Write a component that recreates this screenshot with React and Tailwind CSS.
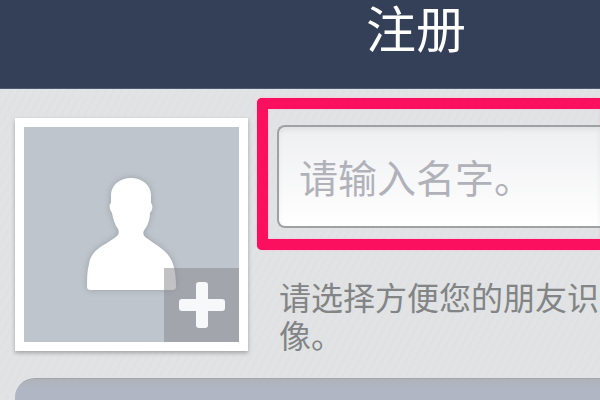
import React, {useState} from "react";

const AvatarPicker = () => {
	return (
		<button
			type="button"
			aria-label="头像"
			className="relative mt-5 aspect-square w-[233px] shrink-0 border-[9px] border-white bg-[#bec5cc] shadow-[0_2px_4px_rgba(0,0,0,0.28)]"
		>
			<svg
				viewBox="0 0 215 215"
				className="block h-full w-full"
				aria-hidden="true"
			>
				<path
					d="M107 51C96 51 87 58 87 68V76C85 77 85 82 88 86C89 92 91 98 94 102C96 107 94 109 89 112C79 119 67 123 65 137C63 144 63 152 63 160Q63 163 67 163H148Q152 163 152 160C152 151 151 143 149 137C145 124 133 119 124 112C119 109 118 106 121 102C124 98 126 92 126 86C129 83 129 78 127 76V68C127 58 118 51 107 51Z"
					fill="#fff"
					className="drop-shadow-[0_0_3px_rgba(90,95,100,0.35)]"
				/>
			</svg>
			<span className="absolute right-0 bottom-0 flex h-[74px] w-[75px] items-center justify-center bg-[#85868c]/50">
				<svg viewBox="0 0 46 46" className="h-[46px] w-[46px]" aria-hidden="true">
					<rect x="17" y="0" width="12" height="46" rx="3" fill="#f7f8fa" />
					<rect x="0" y="17" width="46" height="12" rx="3" fill="#f7f8fa" />
				</svg>
			</span>
		</button>
	);
};

const App = () => {
	const [name, setName] = useState("");

	return (
		<div className="flex min-h-screen flex-col overflow-hidden bg-[#dfe1e3] bg-[repeating-linear-gradient(118deg,rgba(255,255,255,0.08)_0px,rgba(255,255,255,0)_3px,rgba(255,255,255,0.08)_7px)] font-['Liberation_Sans','Noto_Sans_CJK_SC',sans-serif]">
			<header className="h-[89px] border-b border-[#4d5a70] bg-[#334057] pl-[232px] text-center">
				<h1 className="text-[50px] leading-[62px] text-white">注册</h1>
			</header>

			<main className="flex flex-1 flex-col pt-[9px] pl-[15px]">
				<div className="flex items-start gap-[9px]">
					<AvatarPicker />

					<div className="min-w-0 flex-1">
						<div className="rounded-l-[5px] border-[11px] border-r-0 border-[#fb105f] pt-4 pb-[11px] pl-[9px] shadow-[0_0_2px_#ffb3cd,inset_0_0_2px_#ffb3cd]">
							<input
								type="text"
								aria-label="名字"
								placeholder="请输入名字。"
								value={name}
								onChange={(e) => setName(e.target.value)}
								className="block h-[103px] w-full rounded-l-[8px] border-2 border-r-0 border-[#9fa1a4] bg-linear-to-b from-[#eeeff1] to-white pt-1.5 pl-5 text-[39px] text-[#55565c] shadow-[inset_0_3px_5px_rgba(0,0,0,0.06)] outline-none placeholder:text-[#b1b2b9]"
							/>
						</div>

						<p className="mt-[30px] pl-[22px] text-[32px] leading-[38px] whitespace-nowrap text-[#828485]">
							请选择方便您的朋友识
							<br />
							像。
						</p>
					</div>
				</div>

				<section className="mt-[22px] min-h-[22px] flex-1 rounded-tl-[20px] border-t border-[#a3a7ab] bg-linear-to-b from-[#afb3b9] to-[#b0b6c3] to-40%" />
			</main>
		</div>
	);
};

export default App;
